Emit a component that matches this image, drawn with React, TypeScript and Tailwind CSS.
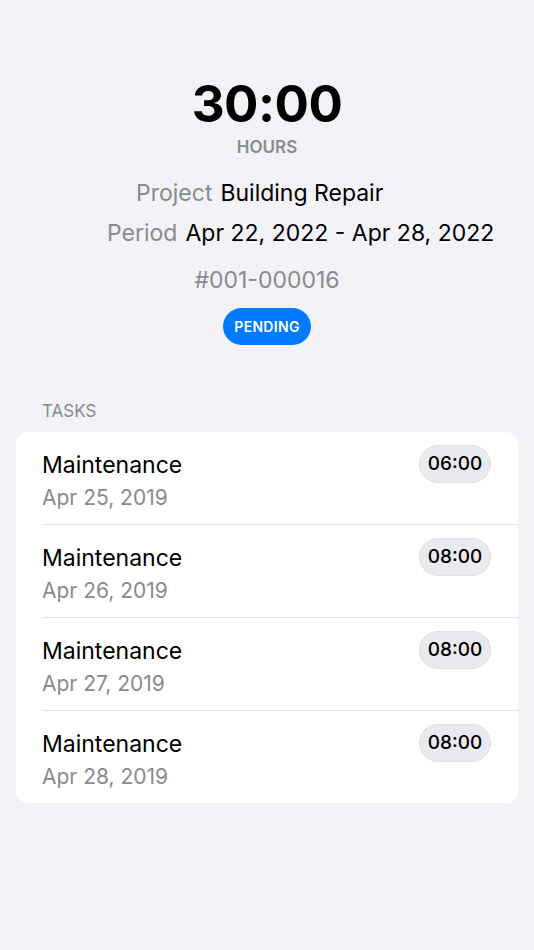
const tasks = [
  { name: 'Maintenance', date: 'Apr 25, 2019', hours: '06:00' },
  { name: 'Maintenance', date: 'Apr 26, 2019', hours: '08:00' },
  { name: 'Maintenance', date: 'Apr 27, 2019', hours: '08:00' },
  { name: 'Maintenance', date: 'Apr 28, 2019', hours: '08:00' },
];

export default function App() {
  return (
    <div
      className="min-h-[950px] w-[534px] bg-[#f2f2f7] text-black"
      style={{ fontFamily: 'Inter, "Noto Sans", sans-serif' }}
    >
      {/* Summary */}
      <div className="flex flex-col items-center pt-[75px]">
        <div className="text-[51px] font-bold leading-[58px] tracking-[-0.5px]">30:00</div>
        <div className="mt-[3px] text-[17px] font-semibold leading-[22px] text-[#8a8a8e]">HOURS</div>
      </div>

      <div className="mt-[20px] flex flex-col gap-[10px] text-[23px] leading-[30px]">
        <div className="flex gap-[8px] pl-[136px]">
          <span className="text-[#8a8a8e]">Project</span>
          <span>Building Repair</span>
        </div>
        <div className="flex gap-[8px] pl-[107px]">
          <span className="text-[#8a8a8e]">Period</span>
          <span>Apr 22, 2022 - Apr 28, 2022</span>
        </div>
      </div>

      <div className="mt-[17px] flex flex-col items-center">
        <div className="text-[23px] leading-[30px] text-[#8a8a8e]">#001-000016</div>
        <div className="mt-[13px] flex h-[37px] w-[88px] items-center justify-center rounded-full bg-[#007aff] text-[14px] font-semibold tracking-[0.3px] text-white">
          PENDING
        </div>
      </div>

      {/* Tasks */}
      <div className="mt-[55px] pl-[42px] text-[17px] leading-[22px] text-[#8a8a8e]">TASKS</div>
      <div className="mx-[16px] mt-[10px] overflow-hidden rounded-[12px] bg-white">
        {tasks.map((t, i) => (
          <div key={i} className="pl-[26px]">
            <div className="flex h-[92px] items-start justify-between pr-[27px] pt-[13px]">
              <div className="mt-[5px] flex flex-col">
                <span className="text-[23px] leading-[30px]">{t.name}</span>
                <span className="mt-[4px] text-[21px] leading-[27px] text-[#8a8a8e]">{t.date}</span>
              </div>
              <div className="flex h-[38px] w-[72px] items-center justify-center rounded-full border border-[#dedee3] bg-[#e9e9ee] text-[19px] font-medium">
                {t.hours}
              </div>
            </div>
            {i < tasks.length - 1 && <div className="h-px bg-[#e4e4e8]" />}
          </div>
        ))}
      </div>
    </div>
  );
}
